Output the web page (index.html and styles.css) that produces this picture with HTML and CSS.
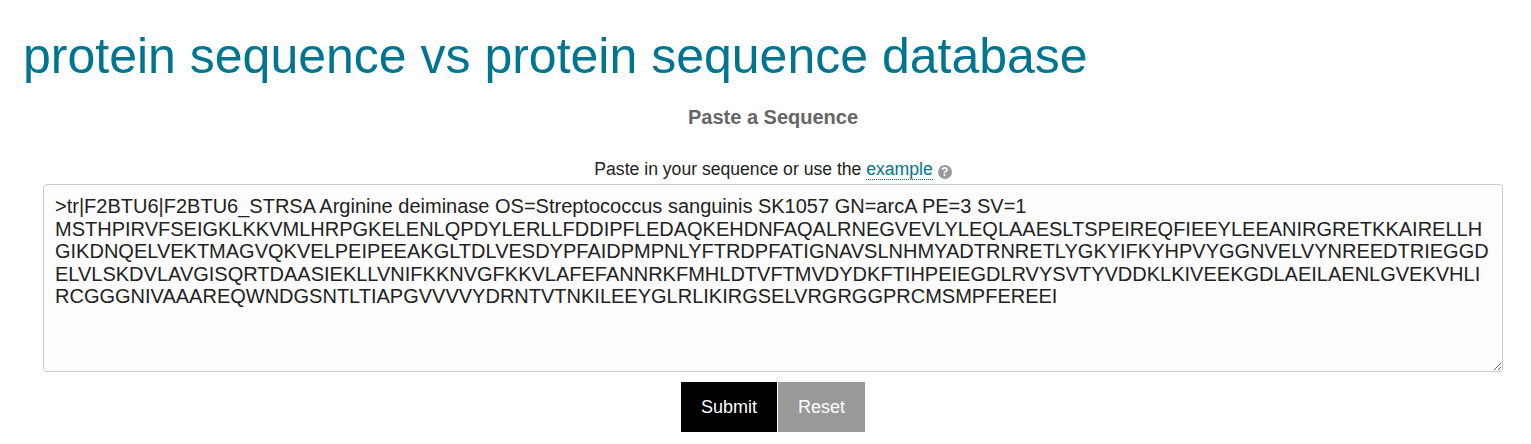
FILE: index.html
```html
<!DOCTYPE html>
<html>
<head>
<meta charset="utf-8">
<link rel="stylesheet" href="styles.css">
</head>
<body>
<div class="page">
  <h1 class="title">protein sequence vs protein sequence database</h1>
  <form class="form">
    <h2 class="section-title">Paste a Sequence</h2>
    <p class="hint">Paste in your sequence or use the <a class="example" href="#">example</a> <span class="help">?</span></p>
    <textarea class="seq" spellcheck="false">&gt;tr|F2BTU6|F2BTU6_STRSA Arginine deiminase OS=Streptococcus sanguinis SK1057 GN=arcA PE=3 SV=1
MSTHPIRVFSEIGKLKKVMLHRPGKELENLQPDYLERLLFDDIPFLEDAQKEHDNFAQALRNEGVEVLYLEQLAAESLTSPEIREQFIEEYLEEANIRGRETKKAIRELLHGIKDNQELVEKTMAGVQKVELPEIPEEAKGLTDLVESDYPFAIDPMPNLYFTRDPFATIGNAVSLNHMYADTRNRETLYGKYIFKYHPVYGGNVELVYNREEDTRIEGGDELVLSKDVLAVGISQRTDAASIEKLLVNIFKKNVGFKKVLAFEFANNRKFMHLDTVFTMVDYDKFTIHPEIEGDLRVYSVTYVDDKLKIVEEKGDLAEILAENLGVEKVHLIRCGGGNIVAAAREQWNDGSNTLTIAPGVVVVYDRNTVTNKILEEYGLRLIKIRGSELVRGRGGPRCMSMPFEREEI</textarea>
    <div class="actions">
      <button type="button" class="btn btn-submit">Submit</button><button type="reset" class="btn btn-reset">Reset</button>
    </div>
  </form>
</div>
</body>
</html>
```
FILE: styles.css
```css
html, body {
  margin: 0;
  padding: 0;
  background: #fff;
}
body {
  font-family: "Liberation Sans", Arial, sans-serif;
  color: #222;
}
.page {
  padding: 0 28px 0 23px;
}
.title {
  margin: 0;
  padding-top: 26px;
  font-size: 50px;
  font-weight: normal;
  line-height: 60px;
  color: #00758f;
}
.form {
  margin-left: 20px;
  text-align: center;
}
.section-title {
  margin: 19px 0 0;
  font-size: 20px;
  line-height: 24px;
  font-weight: bold;
  color: #666;
}
.hint {
  margin: 30px 0 0;
  font-size: 17.6px;
  line-height: 20px;
  color: #222;
}
.example {
  color: #00758f;
  text-decoration: none;
  border-bottom: 1px dotted #00758f;
}
.help {
  display: inline-block;
  width: 14px;
  height: 14px;
  border-radius: 50%;
  background: #999;
  color: #fff;
  font-size: 12px;
  font-weight: bold;
  line-height: 14px;
  text-align: center;
  vertical-align: -1px;
}
.seq {
  display: block;
  box-sizing: border-box;
  width: 100%;
  height: 188px;
  margin: 5px 0 0;
  padding: 10px 11px 8px;
  border: 1px solid #ccc;
  border-radius: 4px;
  background: #fdfdfd;
  font-family: "Liberation Sans", Arial, sans-serif;
  font-size: 20px;
  line-height: 22.5px;
  color: #222;
  text-align: left;
  resize: both;
}
.actions {
  margin-top: 10px;
  display: flex;
  justify-content: center;
  gap: 1px;
}
.btn {
  height: 50px;
  border: none;
  border-radius: 0;
  font-family: "Liberation Sans", Arial, sans-serif;
  font-size: 18px;
  color: #fff;
  padding: 0 20px;
}
.btn-submit {
  background: #000;
}
.btn-reset {
  background: #999;
}
```
